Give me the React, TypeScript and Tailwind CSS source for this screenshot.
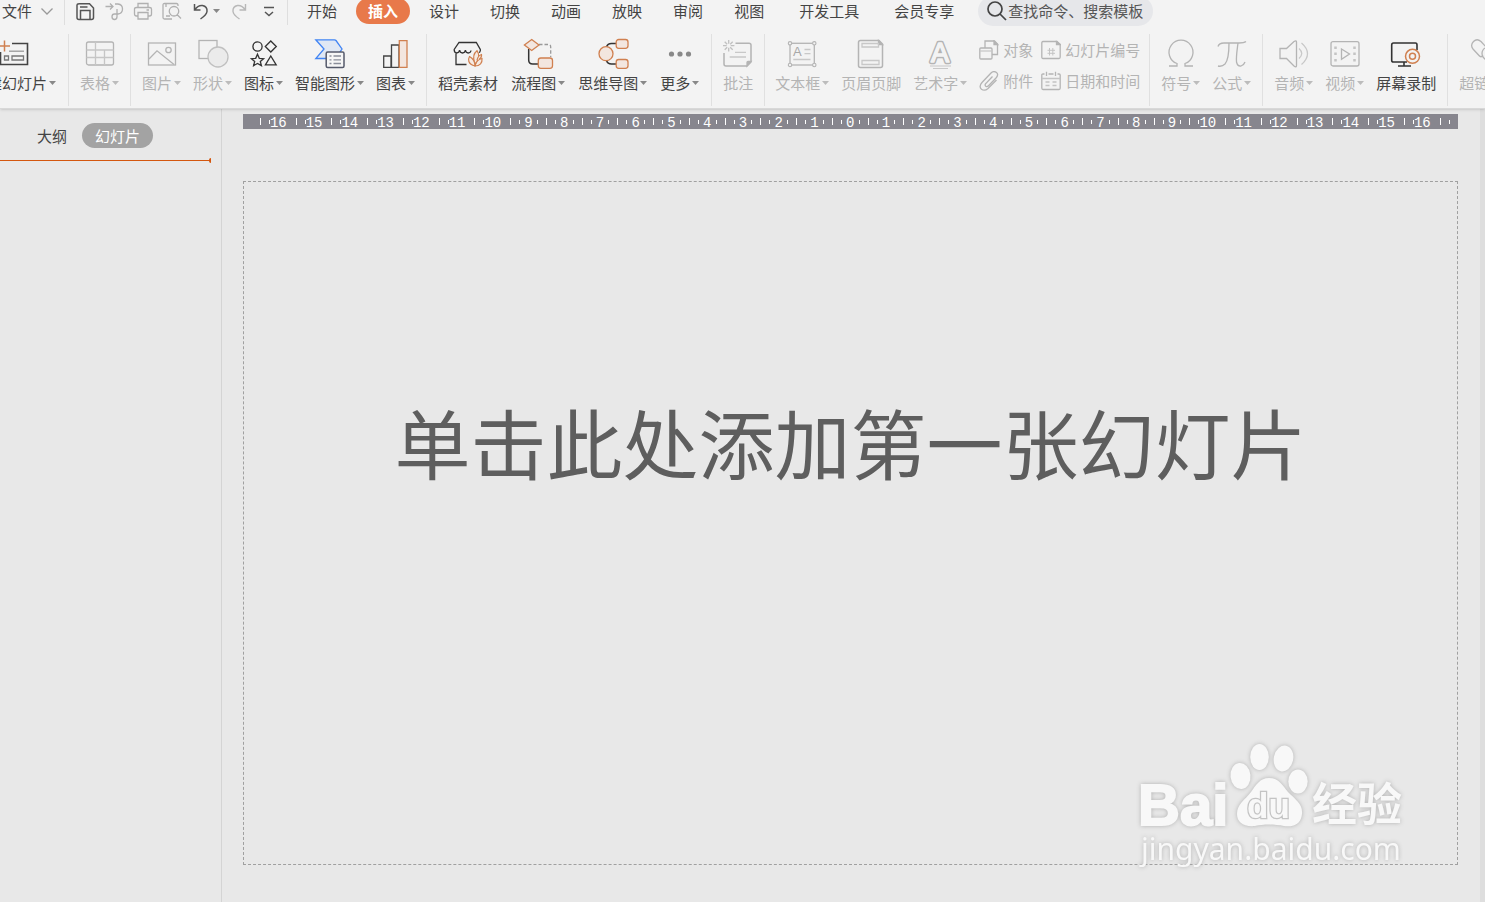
import type { ReactNode } from "react";

const ACCENT = "#d08050";
const DARK = "#444444";
const MUTED = "#b4b4b4";

interface Tool {
  label: string;
  icon: ReactNode;
  menu?: boolean;
  enabled?: boolean;
}

function Caret({ enabled }: { enabled?: boolean }) {
  return (
    <svg viewBox="0 0 7 4" className="w-[7px] h-1 shrink-0 ml-0.5" fill={enabled ? "#888888" : "#bcbcbc"} aria-hidden="true">
      <path d="M0 0H7L3.5 4Z" />
    </svg>
  );
}

function ToolButton({ label, icon, menu, enabled }: Tool) {
  return (
    <button type="button" className={`flex flex-col items-center shrink-0 pt-1 ${enabled ? "text-[#444444]" : "text-[#b4b4b4]"}`}>
      <svg viewBox="0 0 32 32" className="size-8" fill="none" stroke={enabled ? DARK : MUTED} strokeWidth="1.3" aria-hidden="true">
        {icon}
      </svg>
      <span className="flex items-center h-5 mt-[3px] text-[15px] leading-5 whitespace-nowrap">
        {label}
        {menu && <Caret enabled={enabled} />}
      </span>
    </button>
  );
}

function SmallTool({ label, icon }: Tool) {
  return (
    <button type="button" className="flex items-center gap-1 h-[31px] text-[15px] leading-5 whitespace-nowrap text-[#b4b4b4]">
      <svg viewBox="0 0 20 20" className="size-5" fill="none" stroke={MUTED} strokeWidth="1.3" aria-hidden="true">
        {icon}
      </svg>
      {label}
    </button>
  );
}

function Divider() {
  return <div className="w-px shrink-0 self-stretch bg-[#e0e0e0]" />;
}

const newSlide: Tool = {
  label: "新建幻灯片",
  menu: true,
  enabled: true,
  icon: (
    <>
      <path d="M14 5.5H29.5V26.5H2.5V14" strokeWidth="1.6" />
      <path d="M11 13.2H26" stroke="#999999" />
      <path d="M6.5 18h4v4h-4zM14 18h11.5v4H14z" stroke="#777777" />
      <path d="M6.5 2.5V13.5M1 8H12" stroke={ACCENT} strokeWidth="1.5" />
    </>
  ),
};

const table: Tool = {
  label: "表格",
  menu: true,
  icon: (
    <>
      <rect x="2.5" y="4" width="27" height="23" rx="2" />
      <path d="M11.5 4V27M20.5 12V27M2.5 12H29.5M2.5 19.5H29.5" stroke="#c6c6c6" />
    </>
  ),
};

const shapes: Tool[] = [
  {
    label: "图片",
    menu: true,
    icon: (
      <>
        <rect x="2.5" y="5" width="27" height="22" />
        <circle cx="22.5" cy="12" r="2.7" />
        <path d="M3 21L11 12.8L28 26.5" />
      </>
    ),
  },
  {
    label: "形状",
    menu: true,
    icon: (
      <>
        <rect x="2" y="2.5" width="18" height="18" />
        <circle cx="21" cy="19" r="10" fill="#ebebeb" stroke="#c0c0c0" />
      </>
    ),
  },
  {
    label: "图标",
    menu: true,
    enabled: true,
    icon: (
      <g stroke="#333333">
        <circle cx="9.5" cy="8.5" r="4.6" />
        <path d="M22.8 3L28.3 8.5L22.8 14L17.3 8.5Z" />
        <path d="M9.5 16.2L11.3 20.3L15.6 20.7L12.3 23.5L13.4 27.6L9.5 25.4L5.6 27.6L6.7 23.5L3.4 20.7L7.7 20.3Z" />
        <path d="M22.8 18L28.2 26.8H17.4Z" />
      </g>
    ),
  },
  {
    label: "智能图形",
    menu: true,
    enabled: true,
    icon: (
      <>
        <path d="M1.8 1.8H20.5Q21.5 1.8 22 2.5L28 11L21.5 20.5H1.8L10 11Z" fill="#e0e8f4" stroke="#4285f4" />
        <rect x="12.2" y="14" width="17.8" height="15.5" rx="1.5" fill="#f6f6f6" stroke="#555a6b" strokeWidth="1.5" />
        <path d="M15.5 18h2M15.5 21.8h2M15.5 25.5h2M19.5 18H27M19.5 21.8H27M19.5 25.5H27" stroke="#8a8e9a" />
      </>
    ),
  },
  {
    label: "图表",
    menu: true,
    enabled: true,
    icon: (
      <>
        <path d="M3.7 18H11V29.3H3.7ZM11.5 7H19V29.3H11.5Z" />
        <path d="M19.3 2.7H27V29.3H19.3Z" fill="#f3e6df" stroke={ACCENT} />
      </>
    ),
  },
];

const diagrams: Tool[] = [
  {
    label: "稻壳素材",
    enabled: true,
    icon: (
      <>
        <path d="M4 14.5V26.5H14.5M28.3 13V11.5L24.3 4.5H7L2.2 11.5Q2 14.5 4.5 15Q7.2 15 7.6 12Q8 15 10.5 15Q13 15 13.4 12Q13.8 15 16.2 15Q18.6 15 19 12.5M28.3 13L27.3 14.8" stroke="#333333" />
        <g fill="#f6ebe4" stroke={ACCENT} strokeWidth="1.2">
          <path d="M23 28C15.5 26 16 21 17.5 18.5C21 20.5 23 24 23 28Z" />
          <path d="M23 28C24 23 26.5 21 30 20.5C30.5 25 28 28 23 28Z" />
          <path d="M22.5 24C20.5 18 22 15 25 12.7C27.5 16 27.5 20 23.5 26Z" />
          <path d="M25 22C26 18.5 27.5 17 29.5 16.5C30 19 29 20 27 21.5" />
        </g>
      </>
    ),
  },
  {
    label: "流程图",
    menu: true,
    enabled: true,
    icon: (
      <>
        <path d="M6.7 11V22Q6.7 26 10.7 26H16" stroke="#333333" strokeWidth="1.5" />
        <path d="M17 6.5H26.5Q28.7 6.5 28.7 9V19" stroke="#999999" strokeDasharray="3.5 2" />
        <path d="M9.7 1.5L17 7L9.7 12.5L2.4 7Z" fill="#f3e6df" stroke={ACCENT} />
        <rect x="16.3" y="20" width="14.2" height="10.3" rx="2.5" fill="#f3e6df" stroke={ACCENT} />
      </>
    ),
  },
  {
    label: "思维导图",
    menu: true,
    enabled: true,
    icon: (
      <>
        <path d="M9.5 9Q10.5 5.5 14.5 5.5H19M9.5 22.5Q10.5 26 14.5 26H19" stroke="#333333" strokeWidth="1.5" />
        <g fill="#f3e6df" stroke={ACCENT}>
          <circle cx="9" cy="15.7" r="7" />
          <rect x="19.2" y="1.5" width="11.8" height="8.8" rx="2.5" />
          <rect x="19.2" y="21.5" width="11.8" height="8.8" rx="2.5" />
        </g>
      </>
    ),
  },
  {
    label: "更多",
    menu: true,
    enabled: true,
    icon: (
      <g fill="#888888" stroke="none">
        <circle cx="7.5" cy="16" r="2.6" />
        <circle cx="16" cy="16" r="2.6" />
        <circle cx="24.5" cy="16" r="2.6" />
      </g>
    ),
  },
];

const comment: Tool = {
  label: "批注",
  icon: (
    <>
      <path d="M13.5 5.3H27Q29 5.3 29 7.3V24L25 28H4Q2 28 2 26V15" strokeWidth="1.5" />
      <path d="M29 23.5H26Q25 23.5 25 24.5V28Z" fill={MUTED} />
      <path d="M13 14.3H24M7.7 19H24" stroke="#c8c8c8" />
      <path d="M6.7 2V5.7M6.7 9.7V13.4M1 7.7H4.7M8.7 7.7H12.4M2.7 3.7L5.2 6.2M8.2 9.2L10.7 11.7M10.7 3.7L8.2 6.2M5.2 9.2L2.7 11.7" stroke="#c0c0c0" />
    </>
  ),
};

const textTools: Tool[] = [
  {
    label: "文本框",
    menu: true,
    icon: (
      <>
        <rect x="4" y="5.3" width="24.3" height="21.7" />
        <g fill="#f3f3f3" strokeWidth="1.1">
          <circle cx="4" cy="5.3" r="1.7" />
          <circle cx="28.3" cy="5.3" r="1.7" />
          <circle cx="4" cy="27" r="1.7" />
          <circle cx="28.3" cy="27" r="1.7" />
        </g>
        <path d="M18.5 11.5H24.5M18.5 15.7H24.5M7.3 21.5H24.5" stroke="#c8c8c8" />
        <text x="7" y="18" fontSize="13" fontFamily="Liberation Sans, sans-serif" fill="#a8a8a8" stroke="none">A</text>
      </>
    ),
  },
  {
    label: "页眉页脚",
    icon: (
      <>
        <path d="M5.5 2.5H24L27.5 6V27.5Q27.5 29.5 25.5 29.5H5.5Q3.5 29.5 3.5 27.5V4.5Q3.5 2.5 5.5 2.5Z" strokeWidth="1.5" />
        <path d="M23.5 2.5L27.5 6.5H23.5Z" fill={MUTED} />
        <path d="M7 5.5H23.5V9H7ZM7 22.5H24V26.5H7Z" stroke="#c8c8c8" />
      </>
    ),
  },
  {
    label: "艺术字",
    menu: true,
    icon: (
      <>
        <text x="16" y="24" textAnchor="middle" fontSize="27" fontWeight="400" fontFamily="Liberation Sans, sans-serif" fill="#f3f3f3" strokeWidth="4.5" strokeLinejoin="round" paintOrder="stroke">A</text>
        <text x="16" y="24" textAnchor="middle" fontSize="27" fontWeight="400" fontFamily="Liberation Sans, sans-serif" fill="#f3f3f3" stroke="#f3f3f3" strokeWidth="1.6" strokeLinejoin="round">A</text>
        <path d="M6 28H27M9 30.5H24" stroke="#c8c8c8" strokeWidth="1.1" />
      </>
    ),
  },
];

const smallTools: Tool[] = [
  {
    label: "对象",
    icon: (
      <>
        <path d="M6 8V1H15.5L18.5 4V14.5H13" />
        <path d="M15 1V4.5H18.5Z" fill={MUTED} />
        <rect x=".8" y="8" width="12.2" height="11" rx="1" />
        <path d="M.8 11H13" stroke="#c8c8c8" />
      </>
    ),
  },
  {
    label: "幻灯片编号",
    icon: (
      <>
        <path d="M2 1.5H16L19.2 4.5V17Q19.2 18.5 18 18.5H2Q.8 18.5 .8 17V3Q.8 1.5 2 1.5Z" />
        <path d="M15.5 1.5V4.5H19.2Z" fill={MUTED} />
        <path d="M8.5 8V15.5M11.8 8V15.5M6.5 10.3H14M6.5 13.3H14" stroke="#c4c4c4" strokeWidth="1" />
      </>
    ),
  },
  {
    label: "附件",
    icon: <path d="M13.5 5.5L6.5 12.8Q5.5 14.5 7 15.5Q8.3 16 9.5 14.8L17 7Q20 3.5 17.5 1.5Q14.5 -.5 12 2L3 11.5Q-.5 15.5 2.5 18.2Q5.5 20.5 9 17.5L17.5 9" />,
  },
  {
    label: "日期和时间",
    icon: (
      <>
        <path d="M3.5 3H2Q.8 3 .8 4V17Q.8 18.5 2 18.5H18Q19.2 18.5 19.2 17V4Q19.2 3 18 3H16.5M7.5 3H12.5M5.5 .8V5M14.5 .8V5" />
        <path d="M1 7.5H19M4.5 11H8.5M11.5 11H15.5M4.5 14.5H8.5M11.5 14.5H15.5" stroke="#c4c4c4" />
      </>
    ),
  },
];

const symbols: Tool[] = [
  {
    label: "符号",
    menu: true,
    icon: <path d="M4 28H12V25.5A12 12 0 1 1 20 25.5V28H28" />,
  },
  {
    label: "公式",
    menu: true,
    icon: <path d="M2 8.500Q3 5 8 5H23Q28 5 30 3.500M13 5C13 14 12.500 22 9 26Q6 29 2 28M22 5C21 13 20 19 20.500 24Q21.500 28.500 25 28Q28 27 29 24" />,
  },
];

const media: Tool[] = [
  {
    label: "音频",
    menu: true,
    icon: (
      <>
        <path d="M2 10.5H8.5L16 3.5Q18.5 2 18.5 4V27.5Q18.5 30 16 28L8.5 20.5H2Z" />
        <path d="M21 10.5Q26.5 15.5 21 20.5M23.500 5Q35.500 15.500 23.500 26.500" stroke="#c8c8c8" />
      </>
    ),
  },
  {
    label: "视频",
    menu: true,
    icon: (
      <>
        <rect x="2" y="3.7" width="28" height="24.3" rx="2" />
        <path d="M12.5 11L20.5 16L12.5 21.3Z" />
        <path d="M6.5 8.5v2.500M6.5 14.5v2.500M6.5 21v2.500M25.5 8.500v2.500M25.5 14.500v2.500M25.5 21v2.500" strokeWidth="2.5" stroke="#c4c4c4" />
      </>
    ),
  },
  {
    label: "屏幕录制",
    enabled: true,
    icon: (
      <>
        <path d="M27 12V7Q27 5 25.5 5H3.5Q1.7 5 1.7 7V22.5Q1.7 24 3.5 24H17M14 24V27.5M8 28H21" stroke="#333333" strokeWidth="1.6" />
        <circle cx="22.5" cy="18.3" r="7" fill="#f3f3f3" stroke={ACCENT} strokeWidth="1.5" />
        <circle cx="22.5" cy="18.3" r="3" stroke={ACCENT} strokeWidth="1.5" />
      </>
    ),
  },
];

const hyperlink: Tool = {
  label: "超链接",
  menu: true,
  icon: (
    <>
      <path d="M13 17.5Q11 20 9 17.5L3 11Q0 7 3.5 3.5Q7 0 11 3.5L16 9" />
      <path d="M20 14Q22 12 24 14L29 20Q32 24 28.5 28Q25 31 21 27.5L13 19Q11 15 13 12Q15 9 18 10" />
    </>
  ),
};

const tabs = ["开始", "插入", "设计", "切换", "动画", "放映", "审阅", "视图", "开发工具", "会员专享"];

const quickTools = [
  {
    name: "保存",
    enabled: true,
    icon: <path d="M2 4V16.5Q2 18.5 4 18.5H16.5Q18.5 18.5 18.5 16.5V7L14.5 2.8H4Q2 2.8 2 4ZM5.5 18V9.5H15V18M5 6H12.5" strokeWidth="1.5" />,
  },
  {
    name: "输出",
    icon: <path d="M1.5 5.5H8.5M6 2.5L9 5.5L6 8.5M11 3H14Q18.5 3.5 18.5 8Q18.5 12.5 14 13H10.500Q8 13 8 15.700Q8 18.500 10.500 18.500Q13 18.500 13 15.700V8" />,
  },
  {
    name: "打印",
    icon: <path d="M5 6V2.5H15V6M5 15H3.5Q1.5 15 1.5 13V8Q1.5 6.5 3.5 6.5H16.5Q18.5 6.5 18.5 8V13Q18.5 15 16.5 15H15M5 11.5H15V18H5ZM13.5 9H16" />,
  },
  {
    name: "打印预览",
    icon: <path d="M16 5V4Q16 2.5 14.5 2.5H2.5Q1 2.5 1 4V16.5Q1 18 2.5 18H10M4 6V2.5M15 13.5L19 17.5M4 15H8M12 5.5A4.7 4.7 0 1 1 12 15A4.7 4.7 0 1 1 12 5.5Z" />,
  },
];

// Four marks per unit: the number itself, then short, long, short.
const rulerMarks = Array.from({ length: 135 }, (_, i) => i - 67);

function RulerMark({ n }: { n: number }) {
  if (n % 4 === 0) {
    return <span className="pt-[3px]">{Math.abs(n / 4)}</span>;
  }
  // a two-digit number covers the short tick to its right
  const previous = (n - 1) / 4;
  if (Number.isInteger(previous) && Math.abs(previous) >= 10) {
    return null;
  }
  return <span className={n % 2 === 0 ? "w-px h-[7px] bg-white" : "w-px h-1 bg-white"} />;
}

function Watermark() {
  return (
    <svg viewBox="0 0 270 130" className="absolute right-[73px] bottom-8 w-[270px] h-[130px] pointer-events-none drop-shadow-[0_0_2px_#b0b0b0]" aria-hidden="true">
      <g fill="#f8f8f8">
        <text x="1" y="85" fontSize="58" fontWeight="700" fontFamily="Liberation Sans, sans-serif" stroke="#f8f8f8" strokeWidth="2">Bai</text>
        <ellipse cx="103.5" cy="36" rx="10" ry="13" transform="rotate(-6 103.5 36)" />
        <ellipse cx="122.5" cy="17" rx="9.3" ry="13" />
        <ellipse cx="146.5" cy="18.5" rx="9.7" ry="13" transform="rotate(12 146.5 18.5)" />
        <ellipse cx="161" cy="41.5" rx="9.7" ry="12" />
        <path d="M132 38C142 38 146 46 151 52C159 60 166 64 165 74C164 86 154 87 147 86C138 84 126 84 118 86C106 87 100 82 100 74C100 64 108 60 114 52C119 45 123 38 132 38Z" />
        <text x="110" y="78" fontSize="35" fontWeight="700" fontFamily="Liberation Sans, sans-serif" stroke="#c4c4c4" strokeWidth="2.5" paintOrder="stroke">du</text>
        <text x="175" y="81" fontSize="45" fontWeight="700" fontFamily="'Noto Sans CJK SC', sans-serif">经验</text>
        <text x="4" y="120" fontSize="30" fontFamily="'Noto Sans', sans-serif">jingyan.baidu.com</text>
      </g>
    </svg>
  );
}

export default function App() {
  return (
    <div className="flex flex-col min-h-screen overflow-hidden bg-[#e8e8e8] font-['Noto_Sans_CJK_SC',sans-serif] text-[15px] text-[#444444]">
      <header className="relative bg-[#f3f3f3] pb-0.5 border-b border-[#d8d8d8] shadow-sm">
        <div className="flex items-center h-[22px] pl-0.5">
          <button type="button" className="flex items-center gap-2 shrink-0 leading-5">
            文件
            <svg viewBox="0 0 14 14" className="size-3.5" fill="none" stroke="#999999" strokeWidth="1.3" aria-hidden="true">
              <path d="M1.5 4.5L7 10L12.5 4.5" />
            </svg>
          </button>
          <div className="w-px h-7 ml-2.5 bg-[#dedede]" />
          <div className="flex items-center shrink-0 gap-[9px] pl-2.5 pr-[11px]">
            {quickTools.map((tool) => (
              <button key={tool.name} type="button" aria-label={tool.name}>
                <svg viewBox="0 0 20 20" className="block size-5" fill="none" stroke={tool.enabled ? "#555555" : "#b0b0b0"} strokeWidth="1.3">
                  {tool.icon}
                </svg>
              </button>
            ))}
            <button type="button" aria-label="撤销" className="flex items-center">
              <svg viewBox="0 0 20 20" className="size-5" fill="none" stroke="#555555" strokeWidth="1.5">
                <path d="M3.5 3V9H9.5M3.5 9Q7 4 11.5 4.500Q16.500 5.500 16 10.500Q15.500 14 9.500 18" />
              </svg>
              <Caret enabled />
            </button>
            <button type="button" aria-label="恢复">
              <svg viewBox="0 0 20 20" className="block size-5" fill="none" stroke="#b8b8b8" strokeWidth="1.4">
                <path d="M16.500 3V9H10.500M16.500 9Q13 4 8.500 4.500Q3.500 5.500 4 10.500Q4.500 14 10.500 18" />
              </svg>
            </button>
            <button type="button" aria-label="自定义快速访问工具栏" className="ml-1">
              <svg viewBox="0 0 14 14" className="block size-3.5" fill="none" stroke="#555555" strokeWidth="1.5">
                <path d="M2 3.5H12M3 8L7 11.5L11 8" />
              </svg>
            </button>
          </div>
          <div className="w-px h-7 bg-[#dedede]" />
          <nav className="flex items-center shrink-0 gap-[7px] pl-[7px]">
            {tabs.map((tab) => (
              <button
                key={tab}
                type="button"
                className={`h-[26px] px-3 rounded-full leading-5 whitespace-nowrap ${tab === "插入" ? "bg-[#e8794a] text-white font-bold" : ""} ${tab.length > 2 ? "ml-1" : ""}`}
              >
                {tab}
              </button>
            ))}
          </nav>
          <label className="flex items-center shrink-0 h-[30px] ml-3 px-2 rounded-full bg-[#e6e7ea]">
            <svg viewBox="0 0 22 22" className="size-[22px] shrink-0" fill="none" stroke="#444444" strokeWidth="1.7" aria-hidden="true">
              <circle cx="9" cy="9" r="7" />
              <path d="M14 14L20 20" />
            </svg>
            <input type="text" aria-label="查找" placeholder="查找命令、搜索模板" className="w-[137px] bg-transparent outline-none leading-5 placeholder:text-[#555555]" />
          </label>
        </div>

        <div className="flex h-[72px] mt-3 -ml-7 overflow-hidden">
          <div className="flex pr-3">
            <ToolButton {...newSlide} />
          </div>
          <Divider />
          <div className="flex px-[11px]">
            <ToolButton {...table} />
          </div>
          <Divider />
          <div className="flex gap-3 px-[11px]">
            {shapes.map((tool) => (
              <ToolButton key={tool.label} {...tool} />
            ))}
          </div>
          <Divider />
          <div className="flex gap-[13px] pl-[11px] pr-3">
            {diagrams.map((tool) => (
              <ToolButton key={tool.label} {...tool} />
            ))}
          </div>
          <Divider />
          <div className="flex px-2.5">
            <ToolButton {...comment} />
          </div>
          <Divider />
          <div className="flex gap-3 pl-2.5 pr-[11px]">
            {textTools.map((tool) => (
              <ToolButton key={tool.label} {...tool} />
            ))}
            <div className="grid grid-cols-[auto_auto] content-start gap-x-2 shrink-0 -mr-0.5">
              {smallTools.map((tool) => (
                <SmallTool key={tool.label} {...tool} />
              ))}
            </div>
          </div>
          <Divider />
          <div className="flex gap-3 px-[11px]">
            {symbols.map((tool) => (
              <ToolButton key={tool.label} {...tool} />
            ))}
          </div>
          <Divider />
          <div className="flex gap-3 px-[11px]">
            {media.map((tool) => (
              <ToolButton key={tool.label} {...tool} />
            ))}
          </div>
          <Divider />
          <div className="flex px-[11px]">
            <ToolButton {...hyperlink} />
          </div>
        </div>
      </header>

      <div className="flex flex-1">
        <aside className="w-[222px] shrink-0 border-r border-[#d4d4d4]">
          <div className="flex items-center gap-[15px] pt-3.5 pl-[37px]">
            <button type="button" className="leading-5">大纲</button>
            <button type="button" className="h-[25px] px-[13px] rounded-full bg-[#a3a3a3] text-white leading-5">幻灯片</button>
          </div>
          <div className="flex items-center h-[5px] mt-2.5 mr-2.5">
            <div className="flex-1 h-px bg-[#d4570f]" />
            <div className="w-0.5 h-[5px] bg-[#d4570f] rounded-l-full" />
          </div>
        </aside>

        <main className="relative flex flex-col flex-1 min-w-0 pt-[5px] pl-[21px] pr-[22px] pb-[37px]">
          <div className="flex items-center h-[15px] px-1 bg-[#87868e] text-white font-['Liberation_Mono',monospace] text-[14px] leading-[15px] overflow-hidden">
            {rulerMarks.map((n) => (
              <div key={n} className="flex flex-1 basis-0 min-w-0 items-center justify-center">
                <RulerMark n={n} />
              </div>
            ))}
          </div>
          <button
            type="button"
            className="flex flex-1 items-start justify-center mt-[52px] pt-[204px] border border-dashed border-[#a0a0a0] text-[76px] leading-[110px] text-[#5e5e5e] whitespace-nowrap"
          >
            单击此处添加第一张幻灯片
          </button>
          <Watermark />
        </main>
        <div className="w-[5px] shrink-0 bg-[#dedede]" />
      </div>
    </div>
  );
}
